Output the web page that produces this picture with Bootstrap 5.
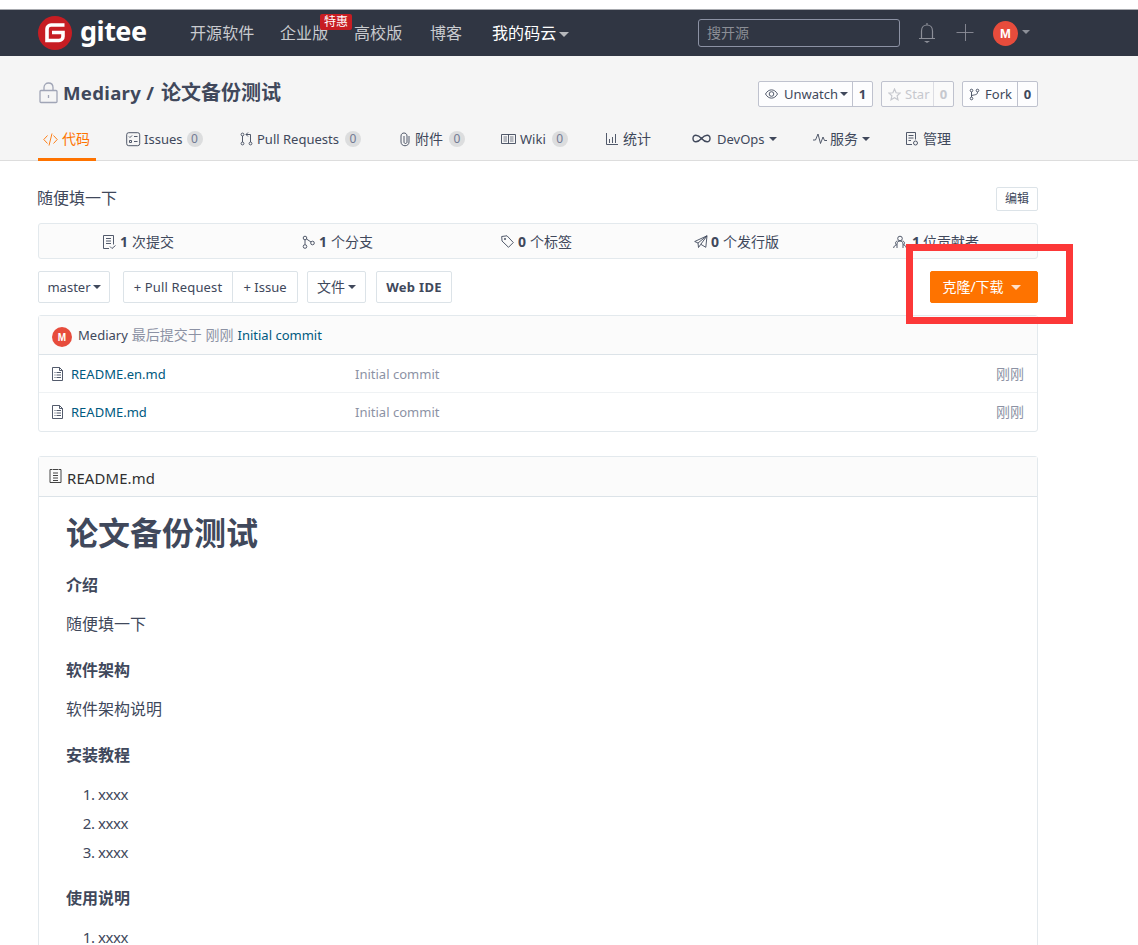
<!DOCTYPE html>
<html lang="zh-CN">
<head>
<meta charset="utf-8">
<title>Mediary/论文备份测试</title>
<link href="https://cdn.jsdelivr.net/npm/bootstrap@5.3.0/dist/css/bootstrap.min.css" rel="stylesheet">
<style>
body{font-family:"Noto Sans","Noto Sans CJK SC",sans-serif;font-size:14px;line-height:20px;color:#40485b;background:#fff;height:945px;overflow:hidden}
.wrap{width:1000px;margin-left:38px}
.en{font-size:.93em}
svg{fill:none;stroke:currentColor;stroke-width:.9;flex:none;display:block}
.site-top{margin-top:9px;height:47px;border-top:1px solid #a7a9ae;background:#303643}
.site-top .wrap{height:46px}
.brand-name{font-family:"Noto Sans";font-weight:700;font-size:27px;color:#fff;line-height:30px;width:68px;margin:-5px 0 0 8px;letter-spacing:-.5px}
.top-menu{display:grid;grid-template-columns:90px 74px 76px 62px auto;margin-left:42px;font-size:16px;width:504px;color:#c9cbcf;letter-spacing:.1px}
.promo{position:absolute;left:40px;top:-9px;width:32px;height:16px;font-size:12px;line-height:16px;background:#c71d23;color:#fff;border-radius:2px;text-align:center;letter-spacing:0}
.tri{display:inline-block;border:4px solid transparent;border-top-color:currentColor;border-bottom:0;flex:none}
.search-box{width:202px;height:28px;border:1px solid #8c92a4;border-radius:3px;color:#8b8e95;padding:0 8px;line-height:26px}
.face{background:#e74c3c;color:#fff;border-radius:50%;font-family:"Liberation Sans";font-weight:700;text-align:center;flex:none}
.repo-head{background:#f5f5f5;height:105px;border-bottom:1px solid #ddd}
.title-row{height:76px}
.repo-title{font-size:20px;line-height:28px;font-weight:700;margin:-2px 0 0 6px}
.count-btn{height:26px;border:1px solid #bfc2ce;border-radius:2px;background:#fdfdfe;line-height:24px}
.count-btn b{border-left:1px solid #bfc2ce;width:20px;text-align:center;font-size:13px;margin-left:auto}
.count-btn.off{color:#c6c8ce;background:#fafafa}.count-btn.off b{border-color:#dcdde3}
.tabs{display:grid;grid-template-columns:88px 114px 160px 101px 104px 87px 121px 92px auto;height:31px;margin-top:-3px}
.tab{display:flex;height:20px;align-items:center;white-space:nowrap}
.tab.on{color:#fe7300;width:58px;height:32px;border-bottom:3px solid #fe7300;padding:0 6px 9px 5px}
.num{width:16px;height:16px;border-radius:8px;background:#dcddde;color:#727a94;font-size:12px;line-height:16px;text-align:center;margin-left:6px}
.cell-btn{height:32px;border:1px solid #dce3e8;border-radius:2px;background:#fff;display:flex;align-items:center;justify-content:center;white-space:nowrap}
.stats{height:36px;border:1px solid #e3e9ed;border-radius:3px;background:#fbfbfb;margin-top:12px;display:grid;grid-template-columns:200px 199px 193px 199px auto;padding:1px 0 0 63px}
.panel{border:1px solid #e3e9ed;border-radius:3px}
.panel-top{background:#fbfbfb;border-bottom:1px solid #dce3e8}
.file-row{height:38px;display:grid;grid-template-columns:20px 284px 1fr auto;align-items:center;padding:0 13px 0 12px;color:#8c92a4}
.link-c{color:#005980}
.doc{padding:16px 27px;font-size:16px;line-height:24px}
.doc h1{font-size:32px;line-height:40px;font-weight:700;margin:0 0 20px}
.doc h4{font-size:16px;line-height:24px;font-weight:700;margin:0 0 15px}
.doc p{margin:0 0 22px}
.doc ol{padding-left:32px;margin:-2px 0 19px;line-height:29px;font-size:15px}
.doc li{letter-spacing:-.45px}
.focus-frame{position:absolute;left:906px;top:244px;width:167px;height:80px;border:7px solid #fc3838}
</style>
</head>
<body class="position-relative">
<header class="site-top">
 <div class="wrap d-flex align-items-center">
  <svg width="34" height="34" viewBox="0 0 34 34"><circle cx="17" cy="17" r="17" fill="#c71d23" stroke="none"/><path d="M26.500 9H13a4 4 0 0 0-4 4V24.500H21a4 4 0 0 0 4-4V16.500H14" stroke="#fff" stroke-width="3.600"/></svg>
  <div class="brand-name">gitee</div>
  <nav class="top-menu">
   <span>开源软件</span><span class="position-relative">企业版<i class="promo fst-normal">特惠</i></span><span>高校版</span><span>博客</span><span class="text-white d-flex align-items-center">我的码云<i class="tri" style="color:#b6b8bc;border-width:5px 5px 0;margin:2px 0 0 3px"></i></span>
  </nav>
  <div class="search-box ms-1">搜开源</div>
  <svg class="ms-3" width="22" height="24" viewBox="0 0 22 24" style="color:#8c8f98"><path d="M3 17.500h16M5.500 17.500V10c0-8 11-8 11 0v7.500M11 4V2" stroke-width="1.200"/><path d="M8 20h6l-3 2z" fill="currentColor" stroke="none"/></svg>
  <svg width="20" height="20" viewBox="0 0 20 20" style="color:#8c8f98;margin-left:17px"><path d="M1.500 9.500h17M10.500 1v17"/></svg>
  <div class="face" style="width:25px;height:25px;line-height:26px;font-size:13px;margin-left:18px">M</div><i class="tri ms-1" style="color:#8c8f98;margin-top:-2px"></i>
 </div>
</header>
<section class="repo-head">
 <div class="wrap">
  <div class="title-row d-flex align-items-center">
   <svg width="19" height="22" viewBox="0 0 19 22" style="color:#a0a5b6;margin:-3px 0 0 1px"><rect x="1" y="8.500" width="17" height="12" rx="1" stroke-width="1.300"/><path d="M5 8V5.500c0-6 9-6 9 0V8M9.500 13v3" stroke-width="1.300"/></svg>
   <h1 class="repo-title d-flex" style="margin-left:5px"><span class="en" style="width:98px;letter-spacing:.3px">Mediary /</span><span>论文备份测试</span></h1>
   <div class="d-flex gap-2 ms-auto">
    <div class="count-btn d-flex align-items-center" style="width:115px;padding-left:6px"><svg width="13" height="10" viewBox="0 0 13 10"><path d="M.5 5c3-5.500 9-5.500 12 0-3 5.500-9 5.500-12 0z"/><circle cx="6.500" cy="5" r="2.300"/></svg><span class="en" style="margin-left:6px">Unwatch</span><i class="tri" style="margin-left:2px"></i><b>1</b></div>
    <div class="count-btn off d-flex align-items-center" style="width:73px;padding-left:6px"><svg width="13" height="13" viewBox="0 0 13 13"><path d="m6.500 1 1.600 3.800 4 .3-3 2.700.9 4-3.500-2.100L3 11.800l.9-4-3-2.700 4-.3z" stroke-width="1.200"/></svg><span class="en ms-1">Star</span><b>0</b></div>
    <div class="count-btn d-flex align-items-center" style="width:76px;padding-left:6px"><svg width="11" height="13" viewBox="0 0 11 13"><circle cx="2.500" cy="2.500" r="1.300"/><circle cx="8.500" cy="2.500" r="1.300"/><circle cx="2.500" cy="10.500" r="1.300"/><path d="M2.500 4v5M8.500 4c0 2.500-1 2.500-6 3.500"/></svg><span class="en" style="margin-left:5px">Fork</span><b>0</b></div>
   </div>
  </div>
  <nav class="tabs">
   <a class="tab on text-decoration-none"><svg width="15" height="13" viewBox="0 0 15 13"><path d="M4.500 2.500.8 6.500l3.700 4M10.500 2.500l3.700 4-3.700 4M9 .5 6 12.500"/></svg><span class="ms-1">代码</span></a>
   <div class="tab"><svg width="15" height="15" viewBox="0 0 15 15"><rect x=".7" y=".7" width="13" height="13" rx="2"/><path d="m3 4.500 1 1L6 3.500M8 4.500h3.500M8 9.500h3.500M3.500 8.500h2v2h-2z"/></svg><span class="en" style="margin-left:3px">Issues</span><i class="num fst-normal" style="margin-left:4px">0</i></div>
   <div class="tab"><svg width="13" height="14" viewBox="0 0 13 14"><circle cx="2.500" cy="2.500" r="1.400"/><circle cx="2.500" cy="11.500" r="1.400"/><circle cx="10.500" cy="11.500" r="1.400"/><path d="M2.500 4v6M10.500 10V2.500H6M8 .5l-2 2 2 2"/></svg><span class="en ms-1">Pull Requests</span><i class="num fst-normal">0</i></div>
   <div class="tab"><svg width="10" height="15" viewBox="0 0 10 15"><path d="M9 4v6c0 5-8 5-8 0V4c0-4 6-4 6 0v6c0 2-3 2-3 0V4"/></svg><span style="margin-left:5px">附件</span><i class="num fst-normal">0</i></div>
   <div class="tab"><svg width="15" height="12" viewBox="0 0 15 12"><path d="M.5 1.500h14v9H.5zM7.500 1.500v9"/><path d="M2.500 4H6M2.500 6H6M2.500 8H6M9 4h3.500M9 6h3.500M9 8h3.500" stroke-width=".7"/></svg><span class="en ms-1">Wiki</span><i class="num fst-normal">0</i></div>
   <div class="tab"><svg width="14" height="13" viewBox="0 0 14 13"><path d="M1.500 0v11.500H13M4.500 6v4M7.500 4v6M10.500 1v9"/></svg><span class="ms-1">统计</span></div>
   <div class="tab"><svg width="19" height="10" viewBox="0 0 19 10"><path d="M9.500 4.500C6 .5 1 0 1 4.500s5 4 8.500 0 8.500-4.500 8.500 0-5 4-8.500 0z" stroke-width="1.400"/></svg><span class="en" style="margin-left:6px">DevOps</span><i class="tri ms-1"></i></div>
   <div class="tab"><svg width="14" height="12" viewBox="0 0 14 12"><path d="M0 7h2.500L5 1l2.500 9.500L10 4l1.500 3.500H14"/></svg><span style="margin-left:3px">服务</span><i class="tri ms-1"></i></div>
   <div class="tab"><svg width="14" height="14" viewBox="0 0 14 14"><path d="M7 12.500H1.500V.5h9v7M3.500 3.500h5M3.500 6h5M3.500 8.500H6"/><circle cx="10.500" cy="11" r="2"/></svg><span class="ms-1">管理</span></div>
  </nav>
 </div>
</section>
<main class="wrap" style="padding-top:26px">
 <div class="d-flex justify-content-between" style="height:24px"><span style="font-size:16px;line-height:23px;margin-left:-1px">随便填一下</span><div class="cell-btn" style="width:42px;height:24px;font-size:12px">编辑</div></div>
 <div class="stats">
  <div class="d-flex align-items-center"><svg width="14" height="14" viewBox="0 0 14 14"><path d="M7 13.500H1.500V.5h10v9M4 3.500h5M4 6h5M4 8.500h5M8 11.500l2 2 3.500-3"/></svg><b style="margin-left:4px">1</b><span class="ms-1">次提交</span></div>
  <div class="d-flex align-items-center"><svg width="13" height="14" viewBox="0 0 13 14"><circle cx="3" cy="3" r="1.800"/><circle cx="3" cy="11.500" r="1.800"/><circle cx="10.500" cy="8" r="1.800"/><path d="M3 5v4.500M4.500 4l4.500 3"/></svg><b style="margin-left:4px">1</b><span class="ms-1">个分支</span></div>
  <div class="d-flex align-items-center"><svg width="13" height="13" viewBox="0 0 13 13"><path d="M.7 1.500 6 .8 12.300 7.500 7.500 12.300 1 6z"/><circle cx="4" cy="4" r=".7"/></svg><b style="margin-left:4px">0</b><span class="ms-1">个标签</span></div>
  <div class="d-flex align-items-center"><svg width="14" height="14" viewBox="0 0 14 14"><path d="M.7 6.500 13 .8l-1.200 11.500-5-3L4.500 12.500 4 8zM4 8l9-7.200-6.200 8.500"/></svg><b style="margin-left:3px">0</b><span class="ms-1">个发行版</span></div>
  <div class="d-flex align-items-center"><svg width="14" height="14" viewBox="0 0 14 14"><circle cx="7" cy="3.500" r="2.300"/><path d="M4 13V9c0-4 6-4 6 0v4M4.500 6C2 6.500 2 8.500 3.500 10 1.500 10.500.7 11.500.7 13M9.500 6c2.500.5 2.500 2.500 1 4 2 .5 2.800 1.500 2.800 3"/></svg><b style="margin-left:5px">1</b><span style="margin-left:3px">位贡献者</span></div>
 </div>
 <div class="d-flex" style="margin-top:12px">
  <div class="cell-btn" style="width:72px"><span class="en">master</span><i class="tri" style="margin-left:2px"></i></div>
  <div class="cell-btn rounded-end-0" style="width:110px;margin-left:13px"><span class="en" style="letter-spacing:.15px">+ Pull Request</span></div>
  <div class="cell-btn rounded-start-0" style="width:66px;margin-left:-1px"><span class="en">+ Issue</span></div>
  <div class="cell-btn" style="width:59px;margin-left:9px">文件<i class="tri" style="margin-left:3px"></i></div>
  <div class="cell-btn fw-bold" style="width:76px;margin-left:10px"><span class="en" style="letter-spacing:.3px">Web IDE</span></div>
  <div class="cell-btn ms-auto text-white" style="width:108px;background:#fe7300;border-color:#fe7300;padding-right:5px">克隆/下载<i class="tri" style="margin-left:7px;border-width:5px 5px 0;color:#ffe0c8"></i></div>
 </div>
 <div class="panel" style="margin-top:12px">
  <div class="panel-top d-flex align-items-center" style="height:39px;padding-left:13px">
   <div class="face mt-1" style="width:20px;height:20px;font-size:10px;line-height:22px">M</div><span class="en" style="margin-left:6px">Mediary</span><span class="ms-1" style="color:#8c92a4">最后提交于 刚刚</span><span class="en ms-1 link-c">Initial commit</span>
  </div>
  <div class="file-row border-bottom" style="border-color:#eff2f4!important"><svg width="13" height="14" viewBox="0 0 13 14" style="color:#40485b"><path d="M1.500.5h7l3 3v10h-10zM8.500.5v3h3M3.500 5.500h1M5.500 5.500H10M3.500 8h1M5.500 8H10M3.500 10.500h1M5.500 10.500H10"/></svg><span class="en link-c">README.en.md</span><span class="en">Initial commit</span><span>刚刚</span></div>
  <div class="file-row"><svg width="13" height="14" viewBox="0 0 13 14" style="color:#40485b"><path d="M1.500.5h7l3 3v10h-10zM8.500.5v3h3M3.500 5.500h1M5.500 5.500H10M3.500 8h1M5.500 8H10M3.500 10.500h1M5.500 10.500H10"/></svg><span class="en link-c">README.md</span><span class="en">Initial commit</span><span>刚刚</span></div>
 </div>
 <div class="panel" style="margin-top:24px;height:520px">
  <div class="panel-top d-flex align-items-center" style="height:40px;padding-left:10px;font-size:16px;color:#303030"><svg width="13" height="15" viewBox="0 0 13 15"><path d="M3 .5H1v13h11V.5h-2M3.500.5h6M4 4h5M4 6.500h5M4 9h5M4 11.500h5"/></svg><span class="en" style="margin-left:5px;padding-top:2px;letter-spacing:.15px">README.md</span></div>
  <article class="doc">
   <h1>论文备份测试</h1>
   <h4>介绍</h4><p>随便填一下</p>
   <h4>软件架构</h4><p>软件架构说明</p>
   <h4>安装教程</h4><ol><li>xxxx</li><li>xxxx</li><li>xxxx</li></ol>
   <h4>使用说明</h4><ol><li>xxxx</li></ol>
  </article>
 </div>
</main>
<div class="focus-frame"></div>
<script src="https://cdn.jsdelivr.net/npm/bootstrap@5.3.0/dist/js/bootstrap.bundle.min.js"></script>
</body>
</html>
